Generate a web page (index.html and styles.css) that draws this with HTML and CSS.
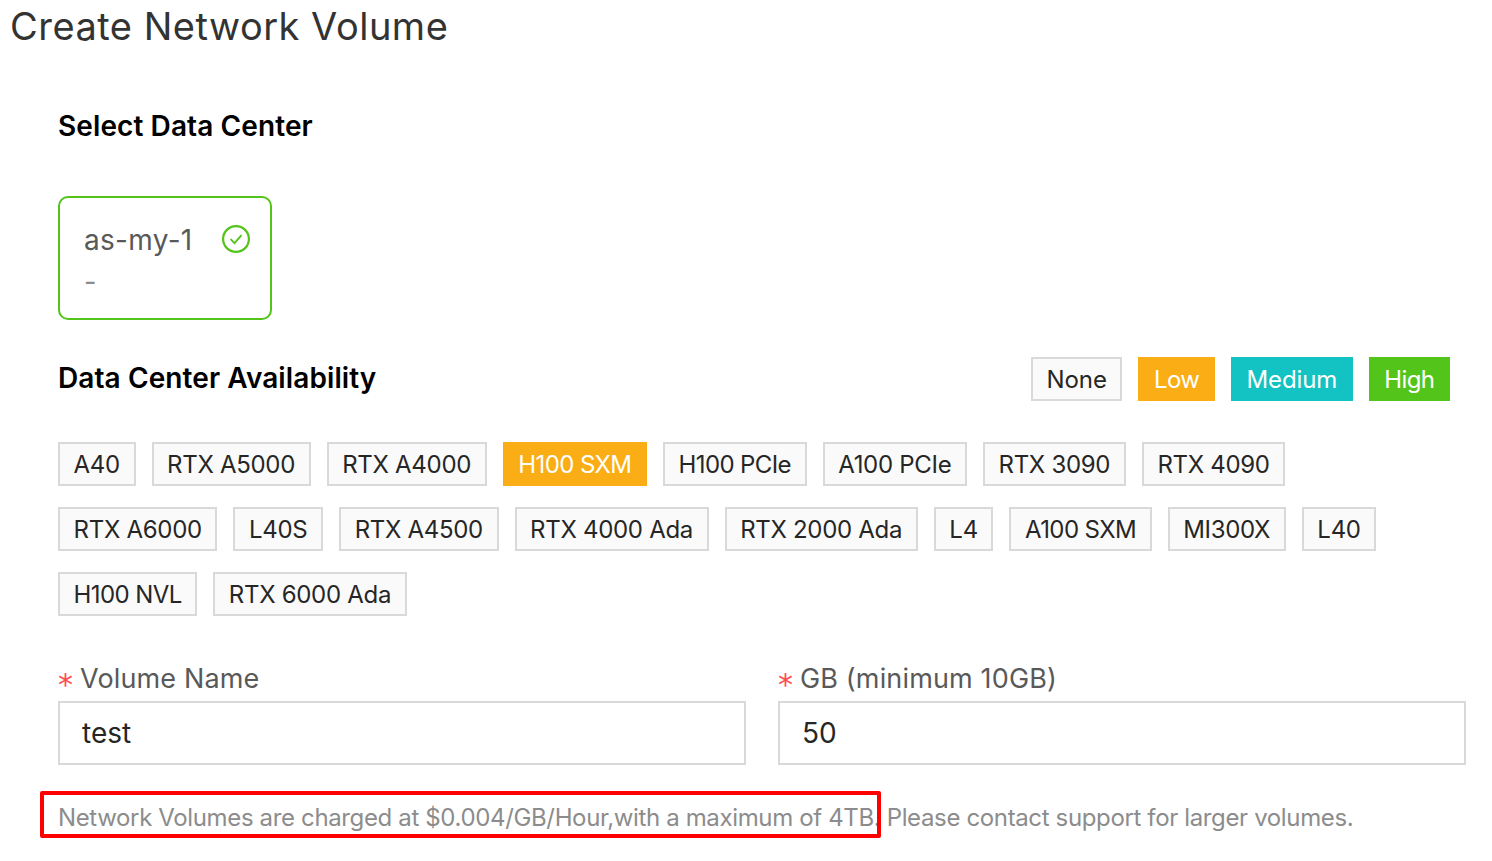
FILE: index.html
```html
<!DOCTYPE html>
<html lang="en">
<head>
<meta charset="utf-8">
<title>Create Network Volume</title>
<link rel="stylesheet" href="styles.css">
</head>
<body>
<h1 class="title">Create Network Volume</h1>
<main class="content">
  <h2 class="section-title first">Select Data Center</h2>
  <div class="dc-card">
    <div class="dc-top">
      <span class="dc-name">as-my-1</span>
      <svg class="dc-check" width="28" height="28" viewBox="0 0 28 28" fill="none" stroke="#52c41a" stroke-width="2.2"><circle cx="14" cy="14" r="12.9"/><path d="M8.6 14.2l3.9 4 7-8" stroke-width="1.9"/></svg>
    </div>
    <div class="dc-sub">-</div>
  </div>
  <div class="avail-head">
    <h2 class="section-title raised">Data Center Availability</h2>
    <div class="legend">
      <span class="tag">None</span>
      <span class="tag low">Low</span>
      <span class="tag medium">Medium</span>
      <span class="tag high">High</span>
    </div>
  </div>
  <div class="tags">
    <div class="tag-row">
      <span class="tag">A40</span>
      <span class="tag">RTX A5000</span>
      <span class="tag">RTX A4000</span>
      <span class="tag low narrow">H100 SXM</span>
      <span class="tag narrow">H100 PCIe</span>
      <span class="tag">A100 PCIe</span>
      <span class="tag">RTX 3090</span>
      <span class="tag">RTX 4090</span>
    </div>
    <div class="tag-row">
      <span class="tag">RTX A6000</span>
      <span class="tag">L40S</span>
      <span class="tag">RTX A4500</span>
      <span class="tag">RTX 4000 Ada</span>
      <span class="tag">RTX 2000 Ada</span>
      <span class="tag">L4</span>
      <span class="tag narrow">A100 SXM</span>
      <span class="tag">MI300X</span>
      <span class="tag">L40</span>
    </div>
    <div class="tag-row">
      <span class="tag narrow">H100 NVL</span>
      <span class="tag">RTX 6000 Ada</span>
    </div>
  </div>
  <div class="fields">
    <label class="field">
      <span class="label"><span class="req">*</span>Volume Name</span>
      <input class="input" type="text" value="test">
    </label>
    <label class="field">
      <span class="label"><span class="req">*</span>GB (minimum 10GB)</span>
      <input class="input" type="text" value="50">
    </label>
  </div>
  <p class="note">Network Volumes are charged at $0.004/GB/Hour,with a maximum of 4TB. Please contact support for larger volumes.<span class="highlight"></span></p>
</main>
</body>
</html>
```
FILE: styles.css
```css
* { box-sizing: border-box; }
html, body { margin: 0; padding: 0; background: #fff; }
body { font-family: "Inter", "Liberation Sans", sans-serif; color: #262626; height: 861px; overflow: hidden; }
.title { margin: 0; padding: 2px 0 0 10px; font-size: 38px; line-height: 48px; font-weight: 400; color: #333; letter-spacing: 0.5px; }
.content { padding: 0 26px 0 58px; }
.section-title { margin: 0; font-size: 28px; line-height: 36px; font-weight: 600; color: #000; letter-spacing: 0.1px; }
.section-title.first { margin-top: 58px; }
.section-title.raised { padding-bottom: 2px; }
.dc-card { width: 214px; height: 124px; margin-top: 52px; border: 2px solid #52c41a; border-radius: 10px; padding: 23px 20px 0 24px; }
.dc-top { display: flex; justify-content: space-between; align-items: center; height: 36px; }
.dc-name { font-size: 28px; color: #595959; letter-spacing: 0.3px; padding-top: 2px; }
.dc-sub { font-size: 27px; line-height: 36px; margin-top: 7px; color: #8c8c8c; }
.avail-head { display: flex; justify-content: space-between; align-items: center; height: 44px; margin: 37px 16px 0 0; }
.legend { display: flex; gap: 16px; }
.tag { display: inline-flex; align-items: center; height: 44px; padding: 0 13.6px; border: 2px solid #d9d9d9; background: #fafafa; font-size: 24px; color: #262626; white-space: nowrap; letter-spacing: -0.3px; }
.tag.narrow { letter-spacing: -0.6px; }
.legend .tag { letter-spacing: -0.6px; }
.legend .tag:first-child { letter-spacing: -0.1px; }
.legend .tag.medium { letter-spacing: -0.15px; }
.tag.low { background: #faad14; border-color: #faad14; color: #fff; }
.tag.medium { background: #13c2c2; border-color: #13c2c2; color: #fff; }
.tag.high { background: #52c41a; border-color: #52c41a; color: #fff; }
.tags { display: flex; flex-direction: column; gap: 21px; margin-top: 41px; }
.tag-row { display: flex; gap: 16px; }
.fields { display: grid; grid-template-columns: 1fr 1fr; gap: 32px; margin-top: 45px; }
.field { display: flex; flex-direction: column; }
.label { font-size: 27px; line-height: 36px; color: #595959; height: 40px; padding-bottom: 4px; display: flex; align-items: center; letter-spacing: 0.15px; }
.req { font-family: "DejaVu Sans", sans-serif; color: #ff4d4f; font-size: 30px; width: 22px; padding-top: 12px; }
.input { height: 64px; border: 2px solid #d9d9d9; padding: 0 22px; font: inherit; font-size: 28px; color: #262626; border-radius: 0; outline: none; background: #fff; }
.note { position: relative; margin: 35px 0 0; font-size: 24px; line-height: 36px; color: #8c8c8c; white-space: nowrap; letter-spacing: -0.36px; }
.highlight { position: absolute; left: -18px; top: -9px; width: 841px; height: 47px; border: 4px solid #ff0000; border-radius: 2px; }
```
